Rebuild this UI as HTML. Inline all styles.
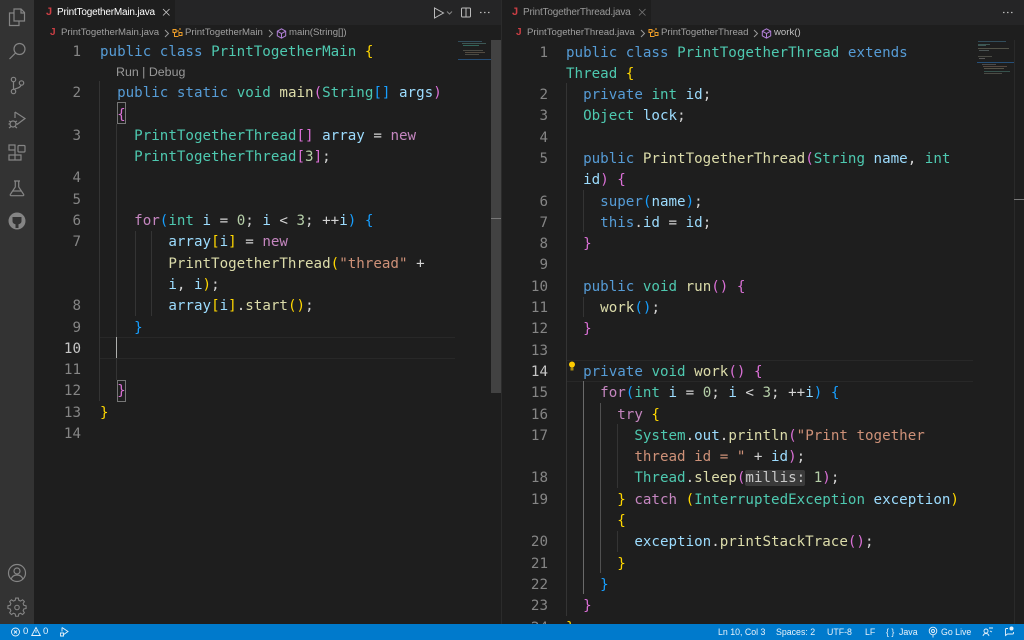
<!DOCTYPE html>
<html><head><meta charset="utf-8"><style>
html,body{margin:0;padding:0;background:#1e1e1e}
#r{position:relative;width:1024px;height:640px;overflow:hidden;background:#1e1e1e;font-family:"Liberation Sans",sans-serif}
.a{position:absolute}
pre{position:absolute;margin:0;font:14.2px/21.3px "DejaVu Sans Mono","Liberation Mono",monospace;color:#d4d4d4;white-space:pre}
.ln{color:#858585;text-align:right;width:30px}
.ln b{font-weight:normal;color:#c6c6c6}
.k{color:#569cd6}.t{color:#4ec9b0}.f{color:#dcdcaa}.v{color:#9cdcfe}.c{color:#c586c0}.n{color:#b5cea8}.s{color:#ce9178}
.g{color:#ffd700}.p{color:#da70d6}.b{color:#179fff}
.h{background:#3a3a3a;color:#c8c8c8;border-radius:2px}
.tx{position:absolute;font-size:10px;line-height:12px;white-space:pre;letter-spacing:-.2px}
.bc{position:absolute;font-size:9.600px;line-height:12px;white-space:pre;color:#a0a0a0}
.j{position:absolute;color:#cc3e44;font-size:11px;font-weight:bold;line-height:12px}
.sb{position:absolute;top:624px;height:16px;line-height:16px;font-size:8.8px;color:#e8f2fa;white-space:pre}
.gd{position:absolute;width:1px;background:#343434}
svg{position:absolute;overflow:visible;fill:none}
.m{position:absolute;height:1px;opacity:.42}
</style></head><body><div id="r">

<div class="a" style="left:0;top:0;width:34px;height:624px;background:#333"></div>
<div class="a" style="left:34px;top:0;width:990px;height:25px;background:#252526"></div>
<div class="a" style="left:34px;top:0;width:141px;height:25px;background:#1e1e1e"></div>
<div class="a" style="left:502px;top:0;width:149px;height:25px;background:#1e1e1e"></div>
<div class="a" style="left:501px;top:0;width:1px;height:624px;background:#2b2b2b"></div>

<!-- activity icons -->
<svg style="left:0;top:0" width="34" height="240" stroke="#858585" stroke-width="1.2">
<path d="M14 9h7l3.500 3.500V21H14zM21 9v4h3.500M14 13H9.500v12.500H19V21"/>
<circle cx="19.500" cy="49" r="5.500"/><path d="M15.500 53l-6 6"/>
<circle cx="13.500" cy="79.500" r="2.200"/><circle cx="13.500" cy="91.500" r="2.200"/><circle cx="21.500" cy="83" r="2.200"/><path d="M13.500 82v7M21 85.200c-.5 2.500-4 2.800-7 4.200"/>
<path d="M15 112l10 6.500-8 6M15 112v6"/><circle cx="13" cy="124" r="3"/><path d="M9 121l2 1M17 121l-2 1M8.500 124h1.500M16 124h1.500M9 128l2-1.500M17 128l-2-1.500"/>
<path d="M9 150h6v-5H9zM9 155v5h6v-5zM9 155h6M15 155h6v5h-6M15 150v5"/><rect x="18" y="145.500" width="7" height="6.500" rx="1"/>
<path d="M14 181h6M15.300 181v6l-5 7.500a.8.8 0 0 0 .8 1.200h11.800a.8.8 0 0 0 .8-1.200l-5-7.500v-6M13 191h8"/>
<circle cx="17" cy="221" r="8.500" fill="#858585" stroke="none"/><path d="M12.500 217h9v4c0 2-1.500 3-3 3.200v3.800h-3v-3.800c-1.500-.2-3-1.200-3-3.200z" fill="#333" stroke="none"/>
</svg>
<svg style="left:0;top:560" width="34" height="64" stroke="#858585" stroke-width="1.2">
<circle cx="17" cy="13" r="8.500"/><circle cx="17" cy="11" r="3"/><path d="M11 19.500c1-3.500 3-4.500 6-4.500s5 1 6 4.500"/>
<g transform="translate(17 47.500) scale(.9) translate(-17 -47)"><path d="M15.500 38.500h3l.5 2.500 2 .8 2.200-1.400 2 2-1.400 2.200.8 2 2.500.5v3l-2.500.5-.8 2 1.400 2.200-2 2-2.200-1.400-2 .8-.5 2.500h-3l-.5-2.500-2-.8-2.200 1.400-2-2 1.400-2.200-.8-2-2.500-.5v-3l2.500-.5.8-2-1.400-2.200 2-2 2.200 1.400 2-.8z" transform="translate(0 -2)"/><circle cx="17" cy="47" r="2.500"/></g>
</svg>

<!-- tabs -->
<div class="j" style="left:46px;top:6px">J</div>
<div class="tx" style="left:57px;top:7px;color:#fff">PrintTogetherMain.java</div>
<svg style="left:162px;top:8px" width="9" height="9" stroke="#ccc" stroke-width=".8"><path d="M1 1l6.500 6.500M7.500 1L1 7.500"/></svg>
<div class="j" style="left:512px;top:6px">J</div>
<div class="tx" style="left:523px;top:7px;color:#9a9a9a">PrintTogetherThread.java</div>
<svg style="left:638px;top:8px" width="9" height="9" stroke="#777" stroke-width=".8"><path d="M1 1l6.500 6.500M7.500 1L1 7.500"/></svg>

<svg style="left:430px;top:0" width="70" height="25" stroke="#bbb" stroke-width="1">
<path d="M4.500 8v10l9-5z"/><path d="M17 11.500l2.500 2.500 2.500-2.500" stroke="#888"/>
<rect x="31.500" y="8" width="9" height="9" rx="1"/><path d="M36 8v9"/>
<path d="M50 12.500h1.500M54 12.500h1.500M58 12.500h1.500" stroke-width="1.200"/></svg>
<svg style="left:1000px;top:0" width="20" height="25" stroke="#bbb"><path d="M3 12.500h1.500M7 12.500h1.500M11 12.500h1.500" stroke-width="1.200"/></svg>

<!-- breadcrumbs -->
<div class="j" style="left:50px;top:27px;font-size:10px">J</div>
<div class="bc" style="left:61px;top:27px">PrintTogetherMain.java</div>
<svg style="left:163px;top:29px" width="8" height="9" stroke="#999"><path d="M2 1l3.500 3.500L2 8"/></svg>
<svg style="left:172px;top:28px" width="11" height="10" stroke="#ee9d28"><path d="M1 1.500h3v3h-3zM7 4.500h3v3h-3zM7 1h2M4 3h3M2.500 5v3.500h4"/></svg>
<div class="bc" style="left:185px;top:27px">PrintTogetherMain</div>
<svg style="left:267px;top:29px" width="8" height="9" stroke="#999"><path d="M2 1l3.500 3.500L2 8"/></svg>
<svg style="left:276px;top:28px" width="11" height="11" stroke="#b180d7"><path d="M5.500 .800l4.200 2.400v4.600l-4.200 2.400-4.200-2.400V3.200zM1.500 3.300l4 2.300 4-2.300M5.500 5.600v4.800"/></svg>
<div class="bc" style="left:289px;top:27px">main(String[])</div>

<div class="j" style="left:516px;top:27px;font-size:10px">J</div>
<div class="bc" style="left:527px;top:27px">PrintTogetherThread.java</div>
<svg style="left:639px;top:29px" width="8" height="9" stroke="#999"><path d="M2 1l3.500 3.500L2 8"/></svg>
<svg style="left:648px;top:28px" width="11" height="10" stroke="#ee9d28"><path d="M1 1.500h3v3h-3zM7 4.500h3v3h-3zM7 1h2M4 3h3M2.500 5v3.500h4"/></svg>
<div class="bc" style="left:661px;top:27px">PrintTogetherThread</div>
<svg style="left:752px;top:29px" width="8" height="9" stroke="#999"><path d="M2 1l3.500 3.500L2 8"/></svg>
<svg style="left:761px;top:28px" width="11" height="11" stroke="#b180d7"><path d="M5.500 .800l4.200 2.400v4.600l-4.200 2.400-4.200-2.400V3.200zM1.500 3.300l4 2.300 4-2.300M5.500 5.600v4.800"/></svg>
<div class="bc" style="left:774px;top:27px;color:#c0c0c0">work()</div>

<!-- left highlights & guides -->
<div class="a" style="left:100px;top:337px;width:355px;height:20px;border:solid #282828;border-width:1px 0"></div>
<div class="gd" style="left:99px;top:81px;height:320px"></div>
<div class="gd" style="left:116px;top:124px;height:256px"></div>
<div class="gd" style="left:135px;top:231px;height:85px"></div>
<div class="gd" style="left:151px;top:231px;height:85px"></div>
<div class="a" style="left:117px;top:102px;width:7px;height:20px;border:1px solid #777"></div>
<div class="a" style="left:117px;top:380px;width:7px;height:20px;border:1px solid #777"></div>
<div class="a" style="left:116px;top:337px;width:1px;height:21px;background:#aeafad"></div>

<pre class="ln" style="left:51px;top:42px">1</pre>
<pre class="ln" style="left:51px;top:40.700px"><span>&#10;&#10;</span>2

3

4
5
6
7


8
9
<b>10</b>
11
12
13
14</pre>
<div class="a" style="left:116px;top:65px;font-size:12.400px;line-height:15px;color:#999">Run | Debug</div>
<pre style="left:100px;top:42px"><span class="k">public</span> <span class="k">class</span> <span class="t">PrintTogetherMain</span> <span class="g">{</span></pre>
<pre style="left:100px;top:40.700px"><span>&#10;&#10;</span>  <span class="k">public</span> <span class="k">static</span> <span class="t">void</span> <span class="f">main</span><span class="p">(</span><span class="t">String</span><span class="b">[]</span> <span class="v">args</span><span class="p">)</span>
  <span class="p">{</span>
    <span class="t">PrintTogetherThread</span><span class="p">[]</span> <span class="v">array</span> = <span class="c">new</span>
    <span class="t">PrintTogetherThread</span><span class="p">[</span><span class="n">3</span><span class="p">]</span>;


    <span class="c">for</span><span class="b">(</span><span class="t">int</span> <span class="v">i</span> = <span class="n">0</span>; <span class="v">i</span> &lt; <span class="n">3</span>; ++<span class="v">i</span><span class="b">)</span> <span class="b">{</span>
        <span class="v">array</span><span class="g">[</span><span class="v">i</span><span class="g">]</span> = <span class="c">new</span>
        <span class="f">PrintTogetherThread</span><span class="g">(</span><span class="s">"thread"</span> +
        <span class="v">i</span>, <span class="v">i</span><span class="g">)</span>;
        <span class="v">array</span><span class="g">[</span><span class="v">i</span><span class="g">]</span>.<span class="f">start</span><span class="g">()</span>;
    <span class="b">}</span>


  <span class="p">}</span>
<span class="g">}</span></pre>

<!-- left minimap -->
<div class="m" style="left:458px;top:41px;width:24px;background:#4e8fb0"></div>
<div class="m" style="left:462px;top:43px;width:24px;background:#6aa7a0"></div>
<div class="m" style="left:463px;top:45px;width:16px;background:#4ec9b0"></div>
<div class="m" style="left:463px;top:50px;width:20px;background:#8a8a7a"></div>
<div class="m" style="left:465px;top:52px;width:20px;background:#a08a70"></div>
<div class="m" style="left:465px;top:54px;width:14px;background:#8a8a7a"></div>
<div class="a" style="left:458px;top:59px;width:33px;height:1px;background:#264f78"></div>
<div class="a" style="left:491px;top:40px;width:10px;height:353px;background:#424242"></div>
<div class="a" style="left:491px;top:218px;width:10px;height:1px;background:#777"></div>

<!-- right highlights & guides -->
<div class="a" style="left:567px;top:360px;width:406px;height:20px;border:solid #282828;border-width:1px 0"></div>
<div class="gd" style="left:566px;top:83px;height:533px"></div>
<div class="gd" style="left:583px;top:190px;height:42px"></div>
<div class="gd" style="left:583px;top:297px;height:20px"></div>
<div class="gd" style="left:583px;top:381px;height:213px;background:#6a6a6a"></div>
<div class="gd" style="left:600px;top:403px;height:170px;background:#505050"></div>
<div class="gd" style="left:617px;top:424px;height:64px"></div>
<div class="gd" style="left:617px;top:531px;height:21px"></div>
<svg style="left:568px;top:361px" width="9" height="11"><circle cx="4" cy="3.500" r="3" fill="#ffcc00"/><rect x="2.500" y="6.500" width="3" height="3" fill="#a88a10"/></svg>

<pre class="ln" style="left:518px;top:42.500px">1

2
3
4
5

6
7
8
9
10
11
12
13
<b>14</b>
15
16
17

18
19

20
21
22
23
24</pre>
<div class="a" style="left:502px;top:40px;width:522px;height:584px;overflow:hidden;pointer-events:none">
<pre style="left:64px;top:2.500px"><span class="k">public</span> <span class="k">class</span> <span class="t">PrintTogetherThread</span> <span class="k">extends</span>
<span class="t">Thread</span> <span class="g">{</span>
  <span class="k">private</span> <span class="t">int</span> <span class="v">id</span>;
  <span class="t">Object</span> <span class="v">lock</span>;

  <span class="k">public</span> <span class="f">PrintTogetherThread</span><span class="p">(</span><span class="t">String</span> <span class="v">name</span>, <span class="t">int</span>
  <span class="v">id</span><span class="p">)</span> <span class="p">{</span>
    <span class="k">super</span><span class="b">(</span><span class="v">name</span><span class="b">)</span>;
    <span class="k">this</span>.<span class="v">id</span> = <span class="v">id</span>;
  <span class="p">}</span>

  <span class="k">public</span> <span class="t">void</span> <span class="f">run</span><span class="p">()</span> <span class="p">{</span>
    <span class="f">work</span><span class="b">()</span>;
  <span class="p">}</span>

  <span class="k">private</span> <span class="t">void</span> <span class="f">work</span><span class="p">()</span> <span class="p">{</span>
    <span class="c">for</span><span class="b">(</span><span class="t">int</span> <span class="v">i</span> = <span class="n">0</span>; <span class="v">i</span> &lt; <span class="n">3</span>; ++<span class="v">i</span><span class="b">)</span> <span class="b">{</span>
      <span class="c">try</span> <span class="g">{</span>
        <span class="t">System</span>.<span class="v">out</span>.<span class="f">println</span><span class="p">(</span><span class="s">"Print together</span>
        <span class="s">thread id = "</span> + <span class="v">id</span><span class="p">)</span>;
        <span class="t">Thread</span>.<span class="f">sleep</span><span class="p">(</span><span class="h">millis:</span> <span class="n">1</span><span class="p">)</span>;
      <span class="g">}</span> <span class="c">catch</span> <span class="g">(</span><span class="t">InterruptedException</span> <span class="v">exception</span><span class="g">)</span>
      <span class="g">{</span>
        <span class="v">exception</span>.<span class="f">printStackTrace</span><span class="p">()</span>;
      <span class="g">}</span>
    <span class="b">}</span>
  <span class="p">}</span>
<span class="g">}</span></pre>
</div>

<!-- right minimap -->
<div class="m" style="left:978px;top:41px;width:28px;background:#4e8fb0"></div>
<div class="m" style="left:978px;top:44px;width:12px;background:#6aa7a0"></div>
<div class="m" style="left:978px;top:45px;width:8px;background:#6aa7a0"></div>
<div class="m" style="left:978px;top:48px;width:31px;background:#9a9a80"></div>
<div class="m" style="left:979px;top:50px;width:10px;background:#8aa0a0"></div>
<div class="m" style="left:978px;top:56px;width:14px;background:#8a8a7a"></div>
<div class="m" style="left:979px;top:58px;width:6px;background:#aaa"></div>
<div class="a" style="left:977px;top:62px;width:37px;height:1px;background:#264f78"></div>
<div class="m" style="left:982px;top:64px;width:14px;background:#8a8a8a"></div>
<div class="m" style="left:983px;top:66px;width:24px;background:#a08070"></div>
<div class="m" style="left:984px;top:68px;width:20px;background:#a09a80"></div>
<div class="m" style="left:984px;top:71px;width:26px;background:#5a9a90"></div>
<div class="m" style="left:984px;top:73px;width:18px;background:#8a8a7a"></div>
<div class="a" style="left:1014px;top:40px;width:1px;height:584px;background:#2a2a2a"></div>
<div class="a" style="left:1014px;top:199px;width:10px;height:1px;background:#777"></div>

<!-- status bar -->
<div class="a" style="left:0;top:624px;width:1024px;height:16px;background:#007acc"></div>
<svg style="left:0;top:624px" width="80" height="16" stroke="#e8f2fa" stroke-width=".9">
<circle cx="15.500" cy="8" r="4"/><path d="M14 6.500l3 3M17 6.500l-3 3"/>
<path d="M36 3.500l4.300 8h-8.600zM36 6v3"/>
<path d="M62 3.500l6 4-5 3.500M62 3.500v4M60.500 9h3v3h-3z"/></svg>
<div class="sb" style="left:23px;font-size:9.500px">0</div>
<div class="sb" style="left:43px;font-size:9.500px">0</div>
<div class="sb" style="left:718px">Ln 10, Col 3</div>
<div class="sb" style="left:776px">Spaces: 2</div>
<div class="sb" style="left:827px">UTF-8</div>
<div class="sb" style="left:865px">LF</div>
<div class="sb" style="left:886px">{ }</div>
<div class="sb" style="left:899px">Java</div>
<svg style="left:928px;top:624px" width="12" height="16" stroke="#e8f2fa" stroke-width=".9"><circle cx="5" cy="7" r="3.800"/><circle cx="5" cy="7" r="1.500"/><path d="M5 11v2.500"/></svg>
<div class="sb" style="left:941px">Go Live</div>
<svg style="left:982px;top:624px" width="42" height="16" stroke="#e8f2fa" stroke-width=".9">
<circle cx="4" cy="7" r="2"/><path d="M1 12c.5-2 1.500-2.500 3-2.500s2.500.5 3 2.500M7 4h4M10 8l-2-1"/>
<path d="M26 4.500h-1.500a1 1 0 0 0-1 1v6l2-1.500h5a1 1 0 0 0 1-1v-1"/><circle cx="29.500" cy="4.500" r="2" fill="#e8f2fa" stroke="none"/></svg>

</div></body></html>
